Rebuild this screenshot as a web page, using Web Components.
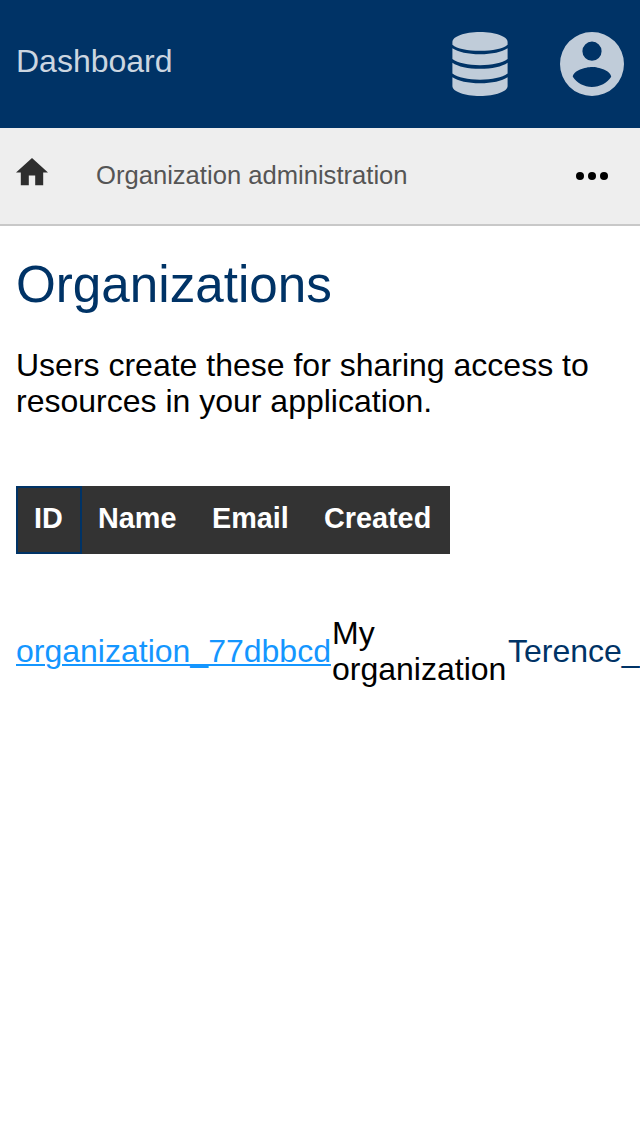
<!DOCTYPE html>
<html lang="en">
<head>
<meta charset="utf-8">
<title>Organizations</title>
<style>
html, body { margin: 0; background: #fff; overflow: hidden; }
body { font: 32px/36px "Liberation Sans", Arial, sans-serif; color: #000; }
</style>
</head>
<body>
<dash-header>Dashboard</dash-header>
<crumb-bar>Organization administration</crumb-bar>
<page-intro><span slot="title">Organizations</span>Users create these for sharing access to resources in your application.</page-intro>
<org-table></org-table>
<script>
function define(name, html) {
  const template = document.createElement('template');
  template.innerHTML = html;
  customElements.define(name, class extends HTMLElement {
    constructor() {
      super();
      this.attachShadow({ mode: 'open' }).append(template.content.cloneNode(true));
    }
  });
}

define('dash-header', `
<style>
:host { display: flex; box-sizing: border-box; height: 128px; padding: 32px 16px; align-items: flex-start; background: #003366; color: #ccd6e0; }
.title { flex: 1; padding-top: 11px; }
svg { display: block; fill: #c0ccd9; }
.db { width: 56px; height: 64px; margin-right: 52px; }
.user { width: 64px; height: 64px; }
</style>
<span class="title"><slot></slot></span>
<svg class="db" viewBox="0 0 56 64">
<path d="M.4 10C.4 4.500 12.500 0 28 0S55.600 4.500 55.600 10V12.800C51 16.800 40.500 18.800 28 18.800S5 16.800 .4 12.800Z"/>
<path d="M.4 16.200C6 20 16 22.200 28 22.200S50 20 55.600 16.200V27C50 31 40 33.200 28 33.200S6 31 .4 27Z"/>
<path d="M.4 30.700C6 34.600 16 36.800 28 36.800S50 34.600 55.600 30.700V41.500C50 45.500 40 47.700 28 47.700S6 45.500 .4 41.500Z"/>
<path d="M.4 45.200C6 49 16 51.200 28 51.200S50 49 55.600 45.200V54C55.600 59.500 43.500 64 28 64S.4 59.500 .4 54Z"/>
</svg>
<svg class="user" viewBox="2 2 20 20"><path d="M12,19.2C9.5,19.2 7.29,17.92 6,16C6.03,14 10,12.9 12,12.9C14,12.9 17.97,14 18,16C16.71,17.92 14.5,19.2 12,19.2M12,5A3,3 0 0,1 15,8A3,3 0 0,1 12,11A3,3 0 0,1 9,8A3,3 0 0,1 12,5M12,2A10,10 0 0,0 2,12A10,10 0 0,0 12,22A10,10 0 0,0 22,12A10,10 0 0,0 12,2Z"/></svg>
`);

define('crumb-bar', `
<style>
:host { display: flex; box-sizing: border-box; height: 98px; padding: 0 32px 0 16px; align-items: center; background: #eee; border-bottom: 2px solid #c8c8c8; font-size: 25.6px; line-height: 30px; color: #555; }
.text { flex: 1; margin: 0 0 2px 48px; }
.home { display: block; width: 32px; height: 27.2px; margin-bottom: 8px; fill: #2e2e2e; }
.dots { display: block; width: 32px; height: 8px; fill: #000; }
</style>
<svg class="home" viewBox="2 3 20 17"><path d="M10,20V14H14V20H19V12H22L12,3L2,12H5V20H10Z"/></svg>
<span class="text"><slot></slot></span>
<svg class="dots" viewBox="0 0 32 8"><circle cx="4" cy="4" r="4"/><circle cx="16" cy="4" r="4"/><circle cx="28" cy="4" r="4"/></svg>
`);

define('page-intro', `
<style>
:host { display: block; padding: 30px 16px 0; }
h1 { margin: 0 0 33px; font-size: 51.2px; line-height: 58px; font-weight: 400; color: #003366; }
p { margin: 0; }
</style>
<h1><slot name="title"></slot></h1>
<p><slot></slot></p>
`);

define('org-table', `
<style>
:host { display: block; padding: 67px 0 0 16px; }
.head { display: grid; grid-template-columns: 66px 114px 112px 142px; width: 434px; height: 68px; background: #333; color: #fff; font-size: 28.8px; font-weight: 700; line-height: 34px; }
.head span { box-sizing: border-box; padding: 15px 0 0 16px; }
.head .sorted { border: 2px solid #003366; padding-top: 13px; }
.row { display: grid; grid-template-columns: 316px 176px 132px; align-items: center; margin-top: 61px; }
a { color: #1496ff; text-decoration: underline; text-decoration-thickness: 2px; text-underline-offset: 2px; }
.email { color: #003366; white-space: nowrap; }
</style>
<div class="head"><span class="sorted">ID</span><span>Name</span><span>Email</span><span>Created</span></div>
<div class="row"><a href="#">organization_77dbbcd</a><span>My organization</span><span class="email">Terence_</span></div>
`);
</script>
</body>
</html>
